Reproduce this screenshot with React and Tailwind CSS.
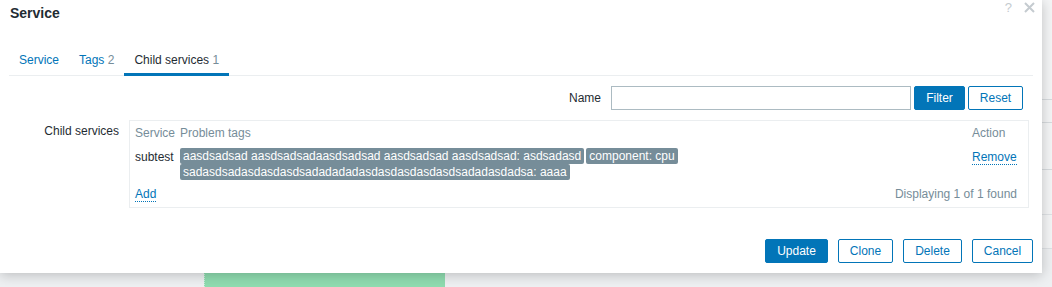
import React from "react";

function Tag({ children }) {
    return (
        <span className="inline-block h-[16px] leading-[16px] px-[3px] rounded-[2px] bg-[#768d99] text-white whitespace-nowrap">
            {children}
        </span>
    );
}

function Btn({ primary, className, children }) {
    return (
        <button
            className={
                "h-[24px] rounded-[2px] border text-[12px] leading-[22px] " +
                (primary
                    ? "bg-[#0275b8] border-[#0275b8] text-white "
                    : "bg-white border-[#0275b8] text-[#0275b8] ") +
                className
            }
        >
            {children}
        </button>
    );
}

export default function App() {
    return (
        <div
            className="relative w-[1052px] h-[287px] overflow-hidden bg-[#eef0f2] text-[12px] text-[#1f2c33]"
            style={{ fontFamily: '"Liberation Sans", Arial, sans-serif' }}
        >
            {/* page behind the dialog */}
            <div className="flex flex-col">
                <div className="h-[100px] border-b border-[#d7dbde] bg-[#f4f5f6]" />
                <div className="h-[23px] border-b border-[#d7dbde] bg-[#f4f5f6]" />
                <div className="h-[47px] border-b border-[#d7dbde] bg-[#f4f5f6]" />
                <div className="h-[45px] border-b border-[#dfe2e5] bg-[#f4f5f6]" />
                <div className="h-[34px] border-b border-[#dfe2e5] bg-[#f4f5f6]" />
                <div className="flex-1 flex pl-[204px]">
                    <div className="w-[241px] h-[40px] bg-[#8fdcb0] border-l border-dotted border-[#c8eed8]" />
                </div>
            </div>

            {/* dialog */}
            <div className="absolute left-0 top-0 w-[1042px] h-[273px] bg-white shadow-[0_2px_12px_rgba(0,0,0,0.22)] flex flex-col">
                <div className="h-[28px] flex items-center justify-between pl-[10px] pr-[7px]">
                    <h4 className="text-[14px] font-bold text-[#1f2c33] -mt-[1px]">Service</h4>
                    <div className="flex items-center gap-[12px] -mt-[14px] text-[#c5cbd0]">
                        <span className="text-[13px] leading-[13px]">?</span>
                        <svg width="11" height="11" viewBox="0 0 11 11">
                            <path d="M1 1 L10 10 M10 1 L1 10" stroke="#c5cbd0" strokeWidth="2" />
                        </svg>
                    </div>
                </div>

                <ul className="mx-[9px] mt-[17px] flex border-b border-[#ebeef0]">
                    <li className="px-[10px] pt-[8px] pb-[6px] leading-[14px] border-b-[3px] border-transparent -mb-[1px] text-[#0275b8]">
                        Service
                    </li>
                    <li className="px-[10px] pt-[8px] pb-[6px] leading-[14px] border-b-[3px] border-transparent -mb-[1px] text-[#0275b8]">
                        Tags <span className="text-[#768d99]">2</span>
                    </li>
                    <li className="px-[10px] pt-[8px] pb-[6px] leading-[14px] border-b-[3px] border-[#0275b8] -mb-[1px] text-[#1f2c33]">
                        Child services <span className="text-[#768d99]">1</span>
                    </li>
                </ul>

                <div className="mt-[10px] h-[24px] flex items-center justify-end pr-[19px]">
                    <span className="mr-[10px]">Name</span>
                    <input className="w-[300px] h-[24px] border border-[#acbbc2] bg-white outline-none" />
                    <Btn primary className="ml-[3px] w-[51px]">Filter</Btn>
                    <Btn className="ml-[3px] w-[55px]">Reset</Btn>
                </div>

                <div className="mt-[10px] flex">
                    <div className="w-[129px] pr-[10px] pt-[4px] text-right leading-[14px]">Child services</div>
                    <div className="w-[900px] h-[88px] border border-[#ebeef0] pl-[5px] pr-[11px] pt-[5px] leading-[14px]">
                        <div className="flex text-[#768d99]">
                            <div className="w-[45px]">Service</div>
                            <div className="flex-1">Problem tags</div>
                            <div className="w-[45px]">Action</div>
                        </div>
                        <div className="flex mt-[8px]">
                            <div className="w-[45px] pt-[2px]">subtest</div>
                            <div className="flex-1 pr-[4px] flex flex-wrap gap-x-[2px]">
                                <Tag>aasdsadsad aasdsadsadaasdsadsad aasdsadsad aasdsadsad: asdsadasd</Tag>
                                <Tag>component: cpu</Tag>
                                <Tag>sadasdsadasdasdasdsadadadadasdasdasdasdasdsadadasdadsa: aaaa</Tag>
                            </div>
                            <div className="w-[45px] pt-[2px]">
                                <a className="text-[#0275b8] border-b border-dotted border-[#0275b8]">Remove</a>
                            </div>
                        </div>
                        <div className="flex justify-between mt-[7px]">
                            <a className="text-[#0275b8] border-b border-dotted border-[#0275b8]">Add</a>
                            <span className="text-[#768d99]">Displaying 1 of 1 found</span>
                        </div>
                    </div>
                </div>

                <div className="mt-auto mb-[10px] flex justify-end gap-[10px] pr-[9px]">
                    <Btn primary className="w-[63px]">Update</Btn>
                    <Btn className="w-[55px]">Clone</Btn>
                    <Btn className="w-[59px]">Delete</Btn>
                    <Btn className="w-[61px]">Cancel</Btn>
                </div>
            </div>
        </div>
    );
}
